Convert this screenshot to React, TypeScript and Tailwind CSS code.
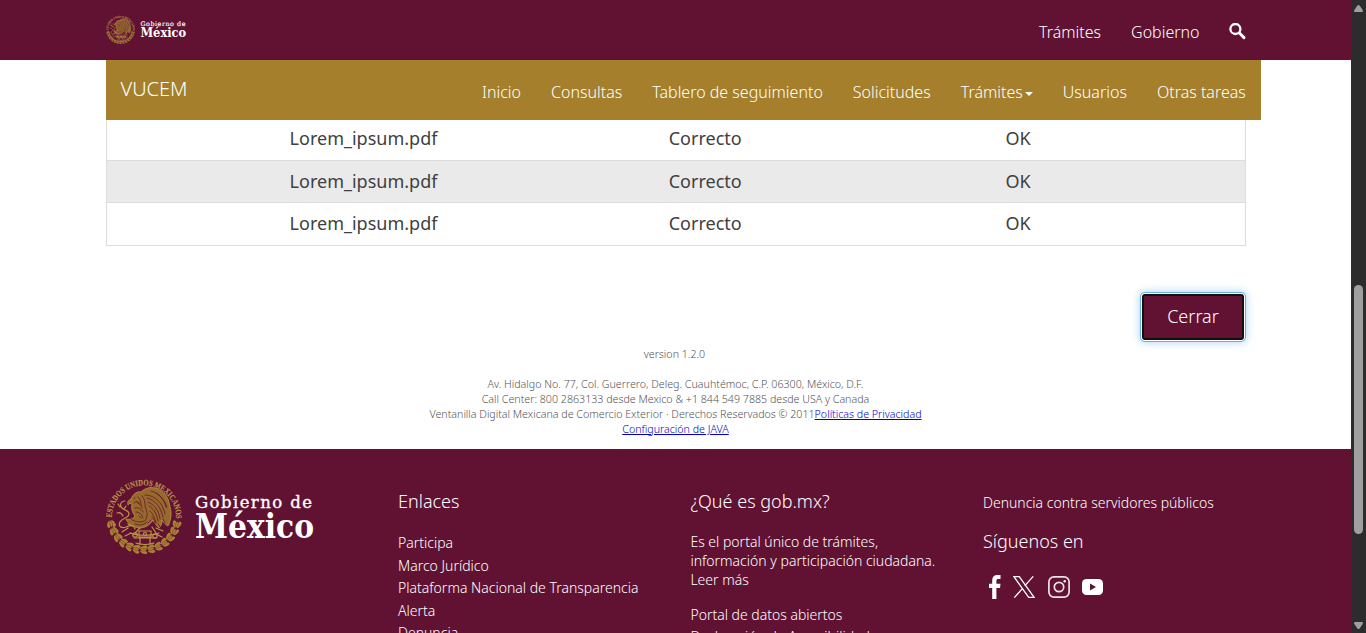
import React from "react";

function Laurel() {
  const clusters = Array.from({ length: 13 }, (_, i) => 166 - i * 12.67);
  return (
    <g>
      <path d="M6.5 44 A32 32 0 0 0 69.5 44" fill="none" strokeWidth=".8" />
      {clusters.map((a, i) => {
        const r = (a * Math.PI) / 180;
        const x = 38 + 33.8 * Math.cos(r);
        const y = 38 + 33.8 * Math.sin(r);
        return (
          <g key={i} transform={`translate(${x} ${y}) rotate(${a + 90})`} fill="#a57f2c" strokeWidth=".6">
            <ellipse cx="-.6" cy="-2.2" rx="3.2" ry="1.4" transform="rotate(18)" />
            <ellipse cx="-.6" cy="2.2" rx="3.2" ry="1.4" transform="rotate(-18)" />
            <ellipse cx=".6" rx="3.4" ry="1.3" stroke="#611232" strokeWidth=".3" />
          </g>
        );
      })}
    </g>
  );
}

function Seal({ className, arc }: { className: string; arc: string }) {
  return (
    <svg viewBox="0 0 76 76" className={className} fill="none" stroke="#bc9548" strokeLinecap="round" strokeLinejoin="round">
      <defs>
        <path id={arc} d="M5.9 39.5 A32.1 32.1 0 1 1 70.1 39.5" />
      </defs>
      <text fill="#bc9548" stroke="#bc9548" strokeWidth=".15" fontFamily="Liberation Serif, serif" fontWeight="700" fontSize="8.4">
        <textPath href={`#${arc}`} textLength="102" lengthAdjust="spacingAndGlyphs">ESTADOS UNIDOS MEXICANOS</textPath>
      </text>
      <Laurel />
      <path
        fill="#a57f2c"
        fillOpacity=".8"
        strokeWidth=".8"
        d="M25 21c2-5 6-8 10-7 5-5 13-6 18-2 7 3 10 9 11 17 2 6 1 13-2 19-3-2-5-4-6-6 0 4-1 6-3 8-3-3-5-5-6-8-3 5-8 8-14 8-6-1-11-4-13-9 4 1 7 0 9-3-3-4-4-8-3-12-1-1-3-1-4 1-1-2 0-5 3-6z"
      />
      <g stroke="#611232" strokeWidth=".75">
        <path d="M39 17c10 0 18 8 20 19M41 20c8 2 14 9 16 19M42 24c7 3 11 9 12 17M43 28c5 3 8 8 9 15M44 33c3 3 5 7 6 12M45 13c8 2 13 8 15 16M46 39c2 2 3 4 3 7M50 15c5 3 9 8 11 14" />
        <path d="M28 20h1M28 25c3-3 5-1 6 2M29 30c4-1 6 1 8 4M30 34c4 0 6 3 7 6M25 41c4 3 9 4 13 2M29 46c4 2 9 1 12-2M36 18c4 4 2 8 4 13s1 8-1 12M32 19c4 4 2 7 4 11" />
        <path d="M31 24l2 2M33 38l2 2M42 45l3-3M57 41l2 4M52 46l2 3" />
      </g>
      <g strokeWidth="1.2">
        <path d="M19 23c-4 0-6 4-3 7s7 2 7 6-7 4-9 8 1 7 6 5 8-2 9 2M11 35c3-1 5 1 6 3M14 29l-2-3M18 31l2-3M22 46l4 2M16 54l6-4" />
        <path d="M24 55c7 3 21 3 29 0M28 60h22M33 53h12v6H33zM34 60v5M44 60v5M30 65c5 2 13 2 18 0M50 50l7 3M46 49l4 6M34 50l-5 5M19 58l6-3M56 59l-6-3" />
        <circle cx="29" cy="57" r="2.2" />
        <circle cx="49" cy="58" r="2.2" />
        <circle cx="39" cy="56" r="1.5" />
      </g>
    </svg>
  );
}

function Wordmark({ className }: { className: string }) {
  return (
    <svg viewBox="0 0 120 52" className={className} fill="#fff">
      <text x="0" y="15" fontFamily="DejaVu Serif, serif" fontSize="16.5" stroke="#fff" strokeWidth=".35" textLength="117" lengthAdjust="spacing">Gobierno de</text>
      <text x="0" y="44.5" fontFamily="DejaVu Serif, serif" fontWeight="700" fontSize="33" textLength="119" lengthAdjust="spacingAndGlyphs">México</text>
    </svg>
  );
}

const files = ["Lorem_ipsum.pdf", "Lorem_ipsum.pdf", "Lorem_ipsum.pdf"];
const links = ["Participa", "Marco Jurídico", "Plataforma Nacional de Transparencia", "Alerta", "Denuncia"];
const menu = ["Inicio", "Consultas", "Tablero de seguimiento", "Solicitudes", "Trámites", "Usuarios", "Otras tareas"];

export default function App() {
  return (
    <div className="flex h-[633px] w-[1366px] overflow-hidden bg-white font-['Noto_Sans',sans-serif] font-light">
      <div className="h-full w-[1351px] overflow-hidden">
        <header className="flex h-[60px] justify-between bg-[#611232] pr-[105px] pl-[106px] text-white">
          <div className="flex items-start pt-[15px]">
            <Seal className="h-[29px] w-[29px]" arc="seal-arc-small" />
            <Wordmark className="mt-[5px] ml-[5px] h-[20px] w-[47px]" />
          </div>
          <nav className="flex items-start pt-5 text-[16px] leading-6">
            <a className="mr-[30px]">Trámites</a>
            <a className="mr-[29.5px]">Gobierno</a>
            <svg className="mt-[3px] h-[17px] w-[17px]" viewBox="0 0 17 17" fill="none" stroke="#fff">
              <circle cx="6.4" cy="6" r="5" strokeWidth="2.3" />
              <path d="M10.4 10l4.6 4.6" strokeWidth="2.9" strokeLinecap="round" />
            </svg>
          </nav>
        </header>

        <div className="ml-[106px] flex h-[60px] w-[1155px] justify-between bg-[#a57f2c] pr-[15.2px] pl-[14.5px] text-white">
          <span className="pt-[14px] text-[20px] leading-[30px]">VUCEM</span>
          <nav className="flex gap-[30px] pt-5 text-[16px] leading-6">
            {menu.map((item) => (
              <a key={item} className="flex whitespace-nowrap">
                {item}
                {item === "Trámites" && (
                  <span className="mt-[12px] ml-[2px] h-0 w-0 border-x-4 border-t-4 border-x-transparent border-t-white" />
                )}
              </a>
            ))}
          </nav>
        </div>

        <main className="ml-[106px] w-[1140px]">
          <div className="border-x border-[#ddd] text-[18px] font-normal text-[#404041]">
            {files.map((file, i) => (
              <div
                key={i}
                className={
                  i === 0
                    ? "flex h-[41px] items-center border-b border-[#ddd] pb-[3px]"
                    : i === 1
                      ? "flex h-[42px] items-center border-b border-[#ddd] bg-[#eaeaea]"
                      : "flex h-[43px] items-center border-b border-[#ddd] pb-[2px]"
                }
              >
                <span className="w-[513px] shrink-0 text-center">{file}</span>
                <span className="w-[170.4px] shrink-0 text-center">Correcto</span>
                <span className="w-[455.2px] shrink-0 text-center">OK</span>
              </div>
            ))}
          </div>
          <div className="flex justify-end pt-[48px] pr-[2px]">
            <button className="h-[46px] w-[102px] rounded-[3px] border-2 border-[#101010] bg-[#611232] pb-[2px] text-[18px] font-light text-white shadow-[0_0_0_1px_#fff,0_0_0_2px_#66afe9,0_0_9px_2px_rgba(102,175,233,0.6)]">
              Cerrar
            </button>
          </div>
        </main>

        <div className="flex h-[109px] flex-col items-center pt-[7px] text-[10.66px] leading-[15px] text-[#545454]">
          <p className="pr-[2px]">version 1.2.0</p>
          <p className="mt-[15px]">Av. Hidalgo No. 77, Col. Guerrero, Deleg. Cuauhtémoc, C.P. 06300, México, D.F.</p>
          <p>Call Center: 800 2863133 desde Mexico &amp; +1 844 549 7885 desde USA y Canada</p>
          <p>
            Ventanilla Digital Mexicana de Comercio Exterior · Derechos Reservados © 2011
            <a className="text-[#0000cc] underline">Políticas de Privacidad</a>
          </p>
          <a className="text-[#0000cc] underline">Configuración de JAVA</a>
        </div>

        <footer className="flex h-[184px] overflow-hidden bg-[#611232] pl-[106px] text-[14px] text-white">
          <div className="flex w-[292px] items-start pt-[29px]">
            <Seal className="h-[76px] w-[76px]" arc="seal-arc-large" />
            <Wordmark className="mt-[15px] ml-[13px] h-[52px] w-[120px]" />
          </div>
          <section className="w-[292.4px] pt-[39px]">
            <h2 className="text-[18px] leading-[26px]">Enlaces</h2>
            <ul className="mt-[18px] leading-[22.6px]">
              {links.map((link) => (
                <li key={link}>{link}</li>
              ))}
            </ul>
          </section>
          <section className="w-[292.6px] pt-[39px]">
            <h2 className="text-[18px] leading-[26px]">¿Qué es gob.mx?</h2>
            <p className="mt-[18px] w-[262px] leading-[19px]">
              Es el portal único de trámites,
              <br />
              información y participación ciudadana.
              <br />
              Leer más
            </p>
            <p className="mt-[15px] leading-[22px]">
              Portal de datos abiertos
              <br />
              Declaración de Accesibilidad
            </p>
          </section>
          <section className="pt-[42px]">
            <p className="leading-[24px]">Denuncia contra servidores públicos</p>
            <h2 className="mt-[13px] text-[18px] leading-[26px]">Síguenos en</h2>
            <div className="mt-[21px] flex h-6 items-center">
              <svg className="ml-[5px] h-6 w-[14px]" viewBox="0 0 14 24" fill="#fff">
                <path d="M4.2 24V13H1V8.8h3.2V5.4C4.2 1.9 6 0 9.3 0H12.5v4.1h-2.1c-1.5 0-2 .6-2 1.9v2.8h4.1L12 13H8.4v11z" />
              </svg>
              <svg className="ml-[11px] h-[22px] w-[22px]" viewBox="0 0 22 22" fill="none" stroke="#fff" strokeWidth="1.3">
                <path d="M.9.7h5.4l14.8 20.6h-5.4zM20.2.4l-8.5 9.5M9.6 12.4L1.3 21.6" />
              </svg>
              <svg className="ml-[13px] h-[22px] w-[22px]" viewBox="0 0 22 22" fill="none" stroke="#fff" strokeOpacity=".88">
                <rect x=".9" y=".9" width="20.2" height="20.2" rx="5" strokeWidth="1.7" />
                <circle cx="11" cy="11" r="4.7" strokeWidth="1.7" />
                <circle cx="16.7" cy="5.2" r="1.2" fill="#fff" stroke="none" />
              </svg>
              <svg className="ml-[12px] h-4 w-[21px]" viewBox="0 0 21 16">
                <rect width="21" height="16" rx="4.5" fill="#fff" />
                <path d="M8 4.6v6.8L14 8z" fill="#611232" />
              </svg>
            </div>
          </section>
        </footer>
      </div>

      <aside className="flex h-full w-[15px] flex-col items-center bg-[#2c2c2c]">
        <svg className="mt-[5px] h-[7px] w-[9px] shrink-0" viewBox="0 0 9 7" fill="#9f9f9f">
          <path d="M3.4.6Q4.5-.6 5.6.6L8.8 5.3Q9.3 7 8 7H1Q-.3 7 .2 5.3z" />
        </svg>
        <div className="mt-[273px] h-[249px] w-[9px] shrink-0 rounded-full bg-[#9f9f9f]" />
        <svg className="mt-auto mb-[4px] h-[7px] w-[9px] shrink-0" viewBox="0 0 9 7" fill="#9f9f9f">
          <path d="M3.4 6.4Q4.5 7.6 5.6 6.4L8.8 1.7Q9.3 0 8 0H1Q-.3 0 .2 1.7z" />
        </svg>
      </aside>
    </div>
  );
}
